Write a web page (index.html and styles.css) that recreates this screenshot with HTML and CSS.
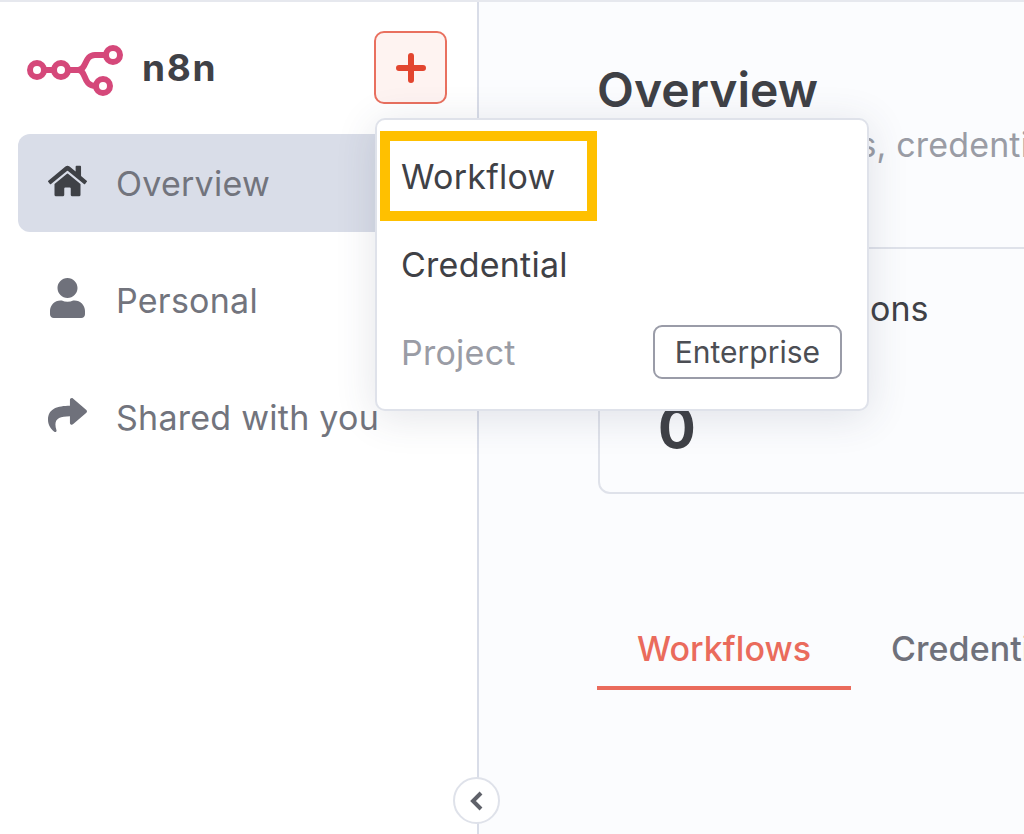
FILE: index.html
```html
<!DOCTYPE html>
<html lang="en">
<head>
  <meta charset="UTF-8">
  <title>n8n - Overview</title>
  <link rel="stylesheet" href="styles.css">
</head>
<body>
  <div class="app">
    <aside class="sidebar">
      <div class="brand-row">
        <div class="brand">
          <svg class="logo" viewBox="0 0 100 56" aria-hidden="true">
            <g fill="none" stroke="#d5487a" stroke-width="6">
              <circle cx="10" cy="28" r="7"/>
              <circle cx="34" cy="28" r="7"/>
              <circle cx="86" cy="13" r="7"/>
              <circle cx="76" cy="44" r="7"/>
              <path d="M17 28h10M41 28h10c9 0 6-15 17-15h11M51 28c9 0 4 16 18 16"/>
            </g>
          </svg>
          <span class="brand-name">n8n</span>
        </div>
        <button class="add-btn" aria-label="Add">
          <svg viewBox="0 0 30 30" aria-hidden="true"><path d="M15 3v24M3 15h24"/></svg>
        </button>
      </div>
      <nav class="side-nav">
        <a class="nav-item active" href="#">
          <svg class="nav-icon" viewBox="0 0 576 512" aria-hidden="true"><path d="M280.37 148.26L96 300.11V464a16 16 0 0 0 16 16l112.06-.29a16 16 0 0 0 15.92-16V368a16 16 0 0 1 16-16h64a16 16 0 0 1 16 16v95.64a16 16 0 0 0 16 16.05L464 480a16 16 0 0 0 16-16V300L295.67 148.26a12.19 12.19 0 0 0-15.3 0zM571.6 251.47L488 182.56V44.05a12 12 0 0 0-12-12h-56a12 12 0 0 0-12 12v72.61L318.47 43a48 48 0 0 0-61 0L4.34 251.47a12 12 0 0 0-1.6 16.9l25.5 31A12 12 0 0 0 45.15 301l235.22-193.74a12.19 12.19 0 0 1 15.3 0L530.9 301a12 12 0 0 0 16.9-1.6l25.5-31a12 12 0 0 0-1.7-16.93z"/></svg>
          Overview
        </a>
        <a class="nav-item" href="#">
          <svg class="nav-icon" viewBox="0 0 448 512" aria-hidden="true"><path d="M224 256c70.7 0 128-57.3 128-128S294.7 0 224 0 96 57.3 96 128s57.3 128 128 128zm89.6 32h-16.7c-22.2 10.2-46.9 16-72.9 16s-50.6-5.8-72.9-16h-16.7C60.2 288 0 348.2 0 422.4V464c0 26.5 21.5 48 48 48h352c26.5 0 48-21.5 48-48v-41.6c0-74.2-60.2-134.4-134.4-134.4z"/></svg>
          Personal
        </a>
        <a class="nav-item" href="#">
          <svg class="nav-icon" viewBox="0 0 512 512" aria-hidden="true"><path d="M503.691 189.836L327.687 37.851C312.281 24.546 288 35.347 288 56.015v80.053C127.371 137.907 0 170.1 0 322.326c0 61.441 39.581 122.309 83.333 154.132 13.653 9.931 33.111-2.533 28.077-18.631C66.066 312.814 132.917 274.316 288 272.085V360c0 20.7 24.3 31.453 39.687 18.164l176.004-152c11.071-9.562 11.086-26.753 0-36.328z"/></svg>
          Shared with you
        </a>
      </nav>
    </aside>

    <main class="content">
      <h1 class="page-title">Overview</h1>
      <p class="page-sub">All the workflows, credentials and executions you have access to</p>
      <section class="stat-card">
        <div class="stat-label">Prod. executions</div>
        <div class="stat-value">0</div>
      </section>
      <div class="tabs">
        <a class="tab active" href="#">Workflows</a>
        <a class="tab" href="#">Credentials</a>
      </div>
    </main>

    <div class="add-menu">
      <div class="menu-item">Workflow</div>
      <div class="menu-item">Credential</div>
      <div class="menu-item disabled">Project <span class="badge">Enterprise</span></div>
    </div>
    <div class="highlight"></div>

    <button class="collapse-btn" aria-label="Collapse">
      <svg viewBox="0 0 16 20" aria-hidden="true"><path d="M12 2l-8 8 8 8"/></svg>
    </button>
  </div>
</body>
</html>
```

FILE: styles.css
```css
/* General */
html, body {
  margin: 0;
  height: 100%;
}

body {
  font-family: Inter, "Liberation Sans", sans-serif;
  color: #3f4146;
  background: #fff;
  overflow: hidden;
}

a {
  text-decoration: none;
  color: inherit;
}

.app {
  position: relative;
  display: flex;
  height: 834px;
  box-sizing: border-box;
  border-top: 2px solid #e6e8ee;
  overflow: hidden;
}

/* Sidebar */
.sidebar {
  width: 479px;
  flex: none;
  box-sizing: border-box;
  background: #fff;
  border-right: 2px solid #d9dde8;
}

.brand-row {
  display: flex;
  align-items: center;
  justify-content: space-between;
  padding: 29px 30px 0 27px;
}

.brand {
  display: flex;
  align-items: center;
  gap: 15px;
}

.logo {
  width: 100px;
  height: 56px;
  margin-top: 5px;
}

.brand-name {
  font-size: 37px;
  font-weight: 700;
  letter-spacing: 1.7px;
}

.add-btn {
  width: 73px;
  height: 73px;
  padding: 0;
  display: flex;
  align-items: center;
  justify-content: center;
  background: #fef3f1;
  border: 2px solid #e9705f;
  border-radius: 10px;
}

.add-btn svg {
  width: 30px;
  height: 30px;
}

.add-btn path {
  fill: none;
  stroke: #e2452f;
  stroke-width: 6;
  stroke-linecap: round;
}

.side-nav {
  margin-top: 30px;
  padding: 0 18px;
  display: flex;
  flex-direction: column;
  gap: 19px;
}

.nav-item {
  height: 98px;
  display: flex;
  align-items: center;
  gap: 29px;
  padding-left: 30px;
  border-radius: 12px;
  font-size: 34px;
  letter-spacing: 0.25px;
  color: #72747d;
}

.nav-item.active {
  background: #d9dde8;
}

.nav-icon {
  width: 39px;
  height: 40px;
  margin-top: -4px;
  flex: none;
  fill: #6f717b;
}

.nav-item.active .nav-icon {
  fill: #3f4146;
}

/* Main column */
.content {
  flex: 1;
  min-width: 0;
  padding: 0 0 0 119px;
  background: #fbfcfe;
  overflow: hidden;
}

.page-title {
  margin: 60px 0 0 -1px;
  font-size: 48px;
  line-height: 56px;
  font-weight: 600;
  white-space: nowrap;
}

.page-sub {
  margin: 4px 0 0;
  font-size: 34px;
  line-height: 46px;
  letter-spacing: 0.15px;
  color: #9a9ca5;
  white-space: nowrap;
}

.stat-card {
  width: 700px;
  height: 247px;
  margin-top: 79px;
  box-sizing: border-box;
  padding: 40px 0 0 60px;
  border: 2px solid #dfe2ea;
  border-radius: 12px;
}

.stat-label {
  font-size: 34px;
  line-height: 40px;
  white-space: nowrap;
}

.stat-value {
  margin-top: 69px;
  margin-left: -2px;
  font-size: 56px;
  line-height: 60px;
  font-weight: 700;
}

.tabs {
  display: flex;
  margin-top: 114px;
  margin-left: -1px;
  white-space: nowrap;
}

.tab {
  flex: none;
  height: 82px;
  box-sizing: border-box;
  padding: 21px 40px 0;
  font-size: 34px;
  line-height: 40px;
  letter-spacing: 0.05px;
  font-weight: 500;
  color: #6f717b;
}

.tab.active {
  color: #ea6b5c;
  border-bottom: 4px solid #ea6b5c;
}

/* Dropdown over the sidebar */
.add-menu {
  position: absolute;
  left: 375px;
  top: 116px;
  width: 494px;
  box-sizing: border-box;
  padding: 12px 25px 13px 24px;
  background: #fff;
  border: 2px solid #dfe2ea;
  border-radius: 10px;
  box-shadow: 0 6px 40px rgba(60, 66, 90, 0.14);
}

.menu-item {
  height: 88px;
  display: flex;
  align-items: center;
  justify-content: space-between;
  font-size: 34px;
  letter-spacing: 0.25px;
}

.menu-item.disabled {
  color: #9a9ca5;
}

.badge {
  height: 54px;
  display: flex;
  align-items: center;
  padding: 0 20px;
  box-sizing: border-box;
  border: 2px solid #9a9ca8;
  border-radius: 9px;
  font-size: 30px;
  letter-spacing: 0;
  color: #4c4e54;
  background: #fff;
}

.highlight {
  position: absolute;
  left: 380px;
  top: 129px;
  width: 217px;
  height: 90px;
  box-sizing: border-box;
  border: 10px solid #ffc000;
}

.collapse-btn {
  position: absolute;
  left: 453px;
  top: 775px;
  width: 47px;
  height: 47px;
  padding: 0;
  display: flex;
  align-items: center;
  justify-content: center;
  background: #fff;
  border: 2px solid #dfe2ea;
  border-radius: 50%;
}

.collapse-btn svg {
  width: 16px;
  height: 20px;
}

.collapse-btn path {
  fill: none;
  stroke: #5f6169;
  stroke-width: 4;
}
```
